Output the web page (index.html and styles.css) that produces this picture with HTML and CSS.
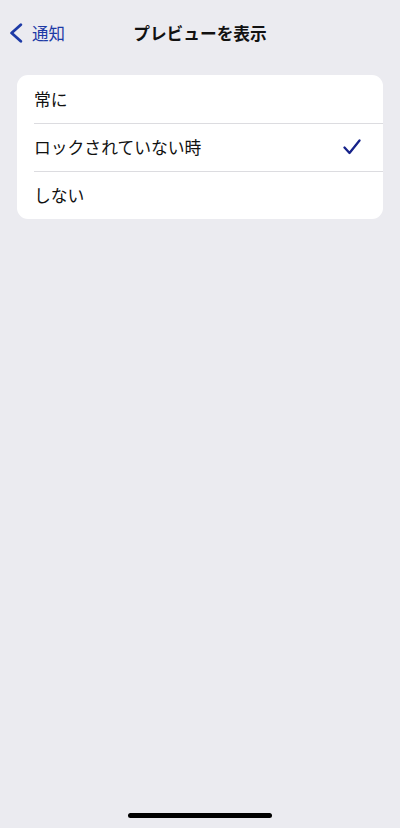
FILE: index.html
```html
<!DOCTYPE html>
<html lang="ja">
<head>
<meta charset="utf-8">
<title>プレビューを表示</title>
<link rel="stylesheet" href="styles.css">
</head>
<body>
<div class="screen">
  <header class="navbar">
    <a class="back" href="#">
      <svg class="chevron" width="14" height="20" viewBox="0 0 14 20">
        <path d="M11.8 1.8 L2.6 10 L11.8 18.2" fill="none" stroke="currentColor" stroke-width="2.8" stroke-linecap="round" stroke-linejoin="round"/>
      </svg>
      <span class="back-label">通知</span>
    </a>
    <h1 class="title">プレビューを表示</h1>
  </header>

  <ul class="group">
    <li class="row"><span class="row-label">常に</span></li>
    <li class="row"><span class="row-label">ロックされていない時</span>
      <svg class="check" width="18" height="16" viewBox="0 0 18 16">
        <path d="M1.5 8.5 L6.5 14 L16.5 1.5" fill="none" stroke="currentColor" stroke-width="2.3" stroke-linecap="round" stroke-linejoin="round"/>
      </svg>
    </li>
    <li class="row"><span class="row-label">しない</span></li>
  </ul>

  <div class="spacer"></div>
  <div class="home-bar"></div>
</div>
</body>
</html>
```
FILE: styles.css
```css
* { box-sizing: border-box; }

html, body {
  margin: 0;
  padding: 0;
  height: 100%;
}

body {
  background: #ebebf0;
  font-family: "Noto Sans CJK JP", "Noto Sans", sans-serif;
  color: #111;
}

.screen {
  display: flex;
  flex-direction: column;
  height: 828px;
}

.navbar {
  position: relative;
  height: 66px;
  display: flex;
  align-items: center;
  justify-content: center;
  padding-bottom: 1px;
}

.back {
  position: absolute;
  left: 9px;
  top: 23px;
  display: flex;
  align-items: center;
  gap: 9px;
  color: #1d3aa6;
  text-decoration: none;
}

.chevron { display: block; }

.back-label {
  font-size: 16.5px;
  line-height: 20px;
}

.title {
  margin: 0;
  font-size: 16.7px;
  font-weight: 700;
  line-height: 20px;
}

.group {
  list-style: none;
  margin: 9px 17px 0;
  padding: 0;
  background: #fff;
  border-radius: 11px;
  overflow: hidden;
}

.row {
  position: relative;
  height: 48px;
  padding: 0 22px 0 17px;
  display: flex;
  align-items: center;
  justify-content: space-between;
}

.row + .row::before {
  content: "";
  position: absolute;
  left: 17px;
  right: 0;
  top: 0;
  height: 1px;
  background: #dcdce0;
}

.row-label {
  font-size: 16.8px;
  line-height: 20px;
  color: #111;
}

.check {
  color: #17238a;
  display: block;
}

.spacer { flex: 1; }

.home-bar {
  align-self: center;
  width: 144px;
  height: 5px;
  border-radius: 3px;
  background: #000;
  margin-bottom: 10px;
}
```
